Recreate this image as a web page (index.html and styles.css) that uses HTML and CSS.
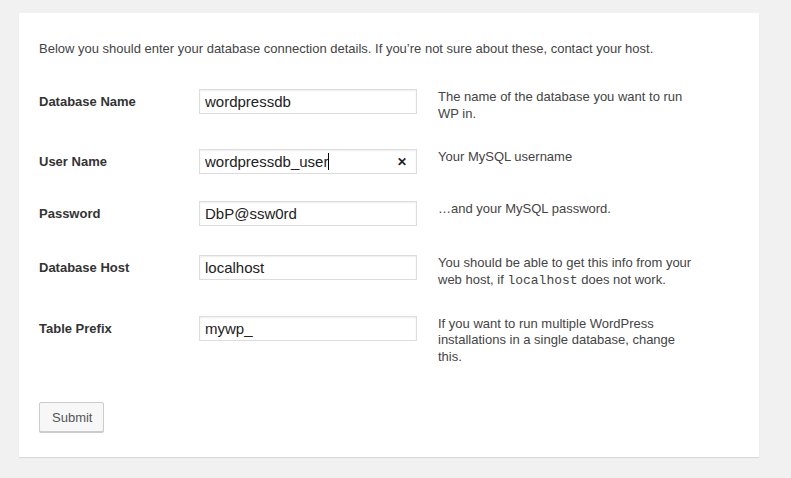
FILE: index.html
```html
<!DOCTYPE html>
<html lang="en">

<head>
    <meta charset="UTF-8">
    <title>WordPress &rsaquo; Setup Configuration File</title>
    <meta name="viewport" content="width=device-width, initial-scale=1.0">
    <link rel="stylesheet" href="styles.css">
</head>

<body>
    <form class="setup" method="post" action="setup-config.php?step=2">
        <p class="intro">Below you should enter your database connection details. If you’re not sure about these, contact your host.</p>

        <div class="row">
            <label class="label" for="dbname">Database Name</label>
            <input class="field" id="dbname" type="text" value="wordpressdb">
            <p class="desc">The name of the database you want to run WP in.</p>
        </div>

        <div class="row">
            <label class="label" for="uname">User Name</label>
            <div class="field focused" id="uname">
                <span>wordpressdb_user</span><i class="caret"></i>
                <span class="clear">&#x2715;</span>
            </div>
            <p class="desc">Your MySQL username</p>
        </div>

        <div class="row tall">
            <label class="label" for="pwd">Password</label>
            <input class="field" id="pwd" type="text" value="DbP@ssw0rd">
            <p class="desc">…and your MySQL password.</p>
        </div>

        <div class="row">
            <label class="label" for="dbhost">Database Host</label>
            <input class="field" id="dbhost" type="text" value="localhost">
            <p class="desc">You should be able to get this info from your web host, if <code>localhost</code> does not work.</p>
        </div>

        <div class="row">
            <label class="label" for="prefix">Table Prefix</label>
            <input class="field" id="prefix" type="text" value="mywp_">
            <p class="desc">If you want to run multiple WordPress installations in a single database, change this.</p>
        </div>

        <p class="step"><button type="submit" class="button">Submit</button></p>
    </form>
</body>

</html>
```

FILE: styles.css
```css
html {
    background: #f1f1f1;
}

body {
    margin: 0;
    padding: 13px 32px 20px 19px;
    font-family: 'Liberation Sans', Arial, sans-serif;
    font-size: 13px;
    color: #444;
}

.setup {
    background: #fff;
    box-shadow: 0 1px 1px #0000001a;
    padding: 20px 20px 25px 20px;
    width: 700px;
}

.intro {
    margin: 0 0 24px 0;
    line-height: 32px;
}

.row {
    display: grid;
    grid-template-columns: 160px 239px 1fr;
    align-items: start;
    padding-bottom: 27px;
}

.tall {
    padding-bottom: 29px;
}

.label {
    font-weight: bold;
    color: #333;
    padding-top: 5px;
    line-height: 16px;
}

.field {
    box-sizing: border-box;
    width: 218px;
    height: 25px;
    margin: 0;
    padding: 2px 5px;
    border: 1px solid #ddd;
    box-shadow: inset 0 1px 2px #00000012;
    font-family: 'Liberation Sans', Arial, sans-serif;
    font-size: 15px;
    line-height: 19px;
    color: #222;
    background: #fff;
    outline: none;
}

.focused {
    position: relative;
    display: flex;
    align-items: center;
}

.caret {
    display: inline-block;
    width: 1px;
    height: 17px;
    background: #000;
}

.clear {
    position: absolute;
    right: 9px;
    top: 3px;
    font-size: 12px;
    font-weight: bold;
    color: #222;
}

.desc {
    margin: 0;
    line-height: 16.5px;
    padding-right: 41px;
}

code {
    font-family: 'Liberation Mono', Consolas, monospace;
    font-size: 13px;
    line-height: 16px;
}

.step {
    margin: 10px 0 0 0;
}

.button {
    height: 30px;
    padding: 0 11px 0 12px;
    border: 1px solid #ccc;
    border-radius: 2px;
    background: #f7f7f7;
    box-shadow: 0 1px 0 #ccc;
    font-family: 'Liberation Sans', Arial, sans-serif;
    font-size: 13px;
    color: #555;
    cursor: pointer;
}
```
